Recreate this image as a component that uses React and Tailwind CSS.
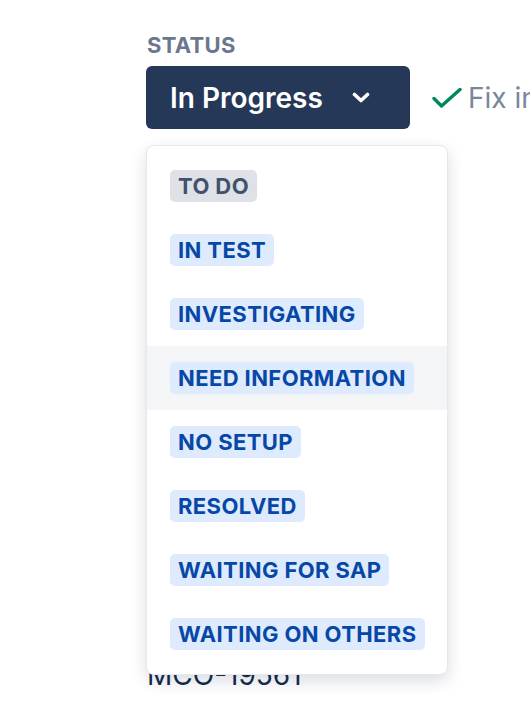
import React from "react";

const items = [
  { label: "TO DO", grey: true },
  { label: "IN TEST" },
  { label: "INVESTIGATING" },
  { label: "NEED INFORMATION", active: true },
  { label: "NO SETUP" },
  { label: "RESOLVED" },
  { label: "WAITING FOR SAP" },
  { label: "WAITING ON OTHERS" },
];

export default function App() {
  return (
    <div
      className="relative w-[530px] h-[726px] overflow-hidden bg-white"
      style={{ fontFamily: "Inter, 'Noto Sans', sans-serif" }}
    >
      <div className="pl-[146px] pt-[32px]">
        <div className="text-[22px] leading-[26px] font-bold text-[#6B778C] tracking-[0.3px] pl-[1px]">
          STATUS
        </div>
        <div className="mt-[8px] flex items-center">
          <button className="shrink-0 h-[63px] w-[264px] rounded-[6px] bg-[#253858] flex items-center pl-[24px] pr-[40px] justify-between text-white">
            <span className="text-[28px] leading-[32px] font-semibold">In Progress</span>
            <svg width="18" height="12" viewBox="0 0 18 12" fill="none">
              <path d="M2.5 2.5 L9 8.5 L15.5 2.5" stroke="white" strokeWidth="3.6" strokeLinecap="round" strokeLinejoin="round" />
            </svg>
          </button>
          <div className="ml-[22px] flex items-center shrink-0">
            <svg width="30" height="20" viewBox="0 0 30 20" fill="none">
              <path d="M2 10.5 L9.5 18 L28 1.5" stroke="#00875A" strokeWidth="3.4" strokeLinecap="round" strokeLinejoin="round" />
            </svg>
            <span className="ml-[6px] text-[28px] leading-[32px] text-[#7A869A] whitespace-nowrap">Fix in</span>
          </div>
        </div>
        <div className="mt-[530px] text-[28px] leading-[32px] text-[#172B4D] pl-[1px]">MCO-19561</div>
      </div>

      <div className="absolute left-[146px] top-[145px] w-[302px] rounded-[8px] bg-white border border-[#E6E8EC] shadow-[0_6px_16px_rgba(9,30,66,0.15)] py-[8px]">
        {items.map((it) => (
          <div
            key={it.label}
            className={`h-[64px] flex items-center pl-[23px] ${it.active ? "bg-[#F4F5F7]" : ""}`}
          >
            <span
              className={`h-[32px] flex items-center px-[8px] rounded-[5px] text-[22px] font-bold tracking-[0.4px] ${
                it.grey ? "bg-[#DFE1E6] text-[#42526E]" : "bg-[#DEEBFF] text-[#0747A6]"
              }`}
            >
              {it.label}
            </span>
          </div>
        ))}
      </div>
    </div>
  );
}
